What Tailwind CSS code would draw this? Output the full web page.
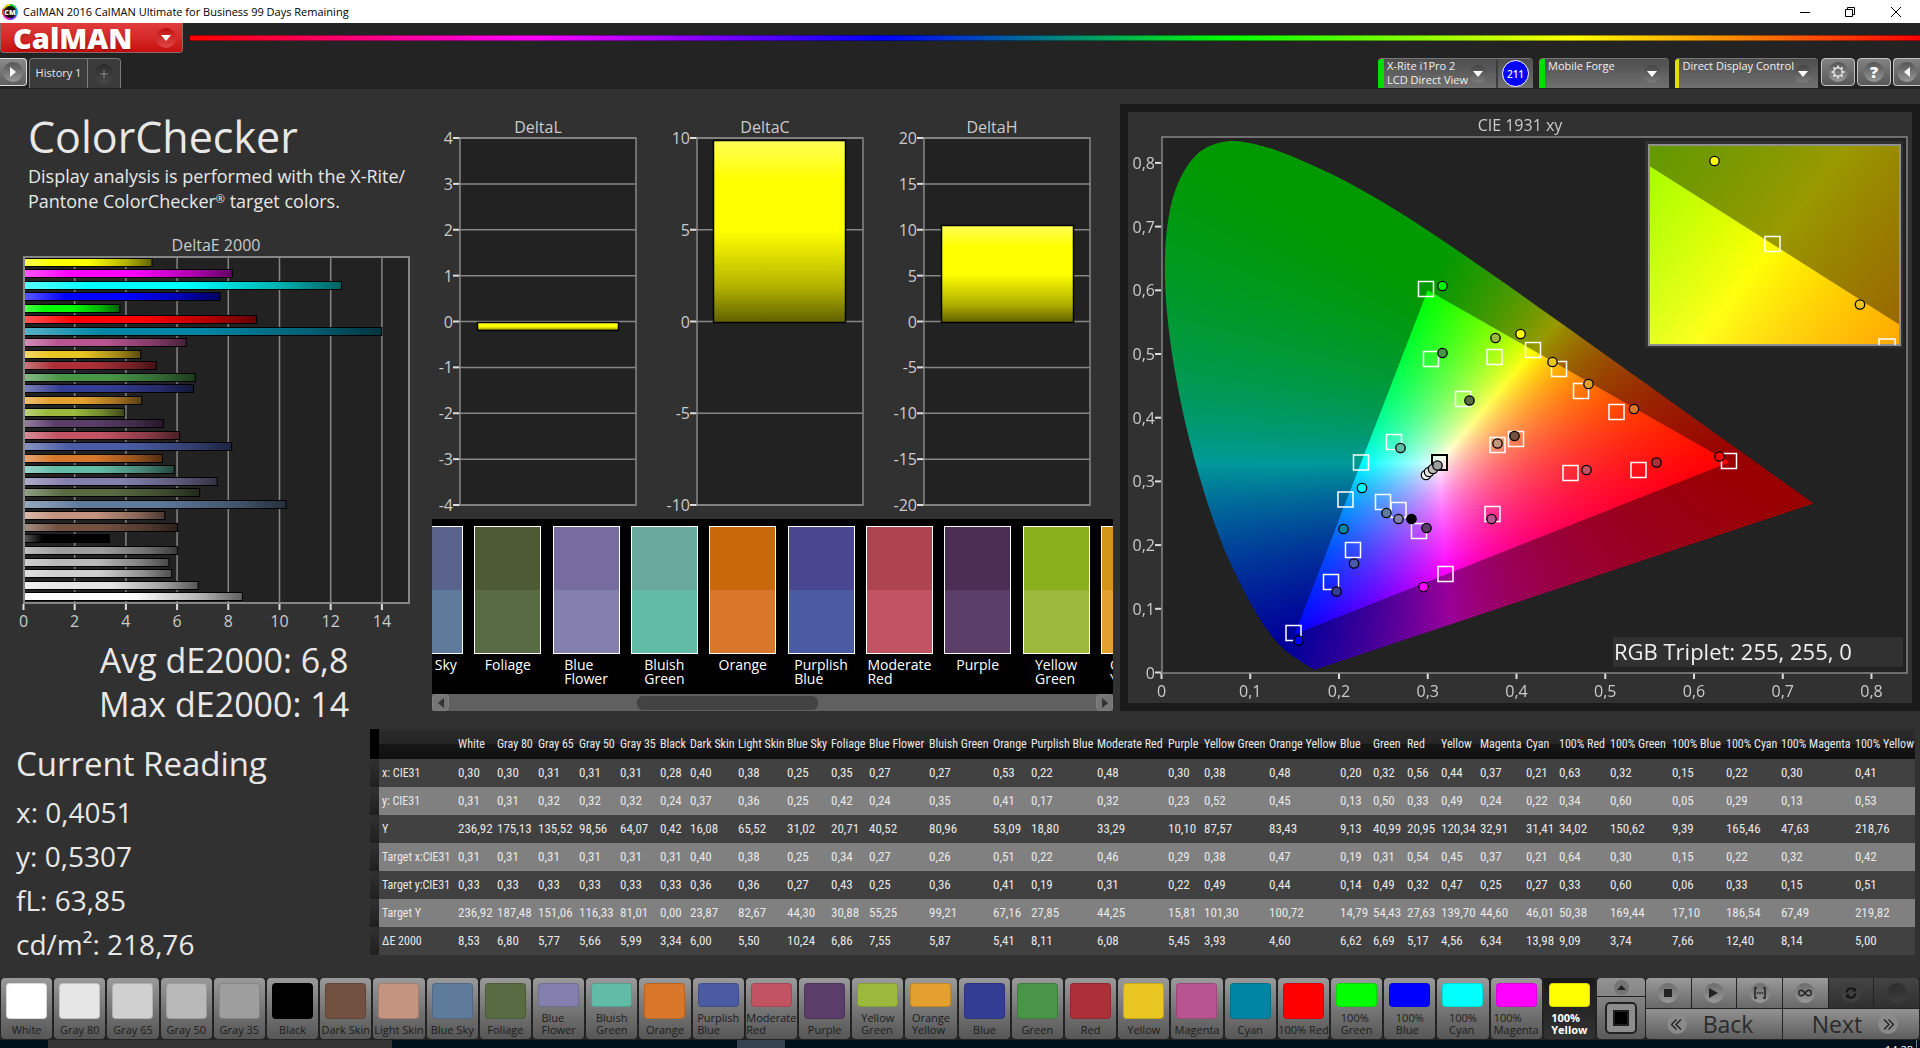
<!DOCTYPE html>
<html lang="en">
<head>
<meta charset="utf-8">
<title>CalMAN 2016</title>
<script src="https://cdn.jsdelivr.net/npm/@tailwindcss/browser@4"></script>
</head>
<body class="flex min-h-screen flex-col overflow-x-hidden bg-[#313131] font-['Open_Sans',sans-serif] text-[#e8e8e8]">

<!-- Window title bar -->
<div class="flex h-[23px] items-center bg-white text-black">
  <svg class="ml-0.5 size-4" viewBox="0 0 16 16">
    <circle cx="8" cy="8" r="7" fill="#111"/>
    <g fill="none" stroke-width="2">
      <path d="M8 1A7 7 0 0 1 14 4.500" stroke="#19c34a"/><path d="M14 4.500A7 7 0 0 1 14 11.500" stroke="#18a8e0"/><path d="M14 11.500A7 7 0 0 1 8 15" stroke="#6a3be0"/><path d="M8 15A7 7 0 0 1 2 11.500" stroke="#e020c0"/><path d="M2 11.500A7 7 0 0 1 2 4.500" stroke="#e04020"/><path d="M2 4.500A7 7 0 0 1 8 1" stroke="#d8d020"/>
    </g>
    <text x="8" y="11" text-anchor="middle" class="fill-white text-[7px] font-extrabold">CM</text>
  </svg>
  <span class="ml-[5px] text-[11px] leading-4">CalMAN 2016 CalMAN Ultimate for Business 99 Days Remaining</span>
  <div class="ml-auto flex h-full">
    <button aria-label="Minimize" class="grid w-[45px] place-items-center"><svg class="size-3" viewBox="0 0 12 12"><path d="M1 6.500h10" stroke="#000"/></svg></button>
    <button aria-label="Restore" class="grid w-[45px] place-items-center"><svg class="size-3" viewBox="0 0 12 12" fill="none" stroke="#000"><path d="M1.500 3.500h7v7h-7zM3.500 3.500v-2h7v7h-2"/></svg></button>
    <button aria-label="Close" class="grid w-[48px] place-items-center"><svg class="size-3" viewBox="0 0 12 12" stroke="#000"><path d="M1 1l10 10M11 1L1 11"/></svg></button>
  </div>
</div>

<!-- Logo, spectrum line, tabs and device menus -->
<header class="bg-[#232323]">
  <div class="flex h-[35px]">
    <button aria-label="CalMAN menu" class="flex h-[30px] w-[183px] items-center rounded-b-[4px] border border-t-0 border-[#8a6a6a] bg-linear-to-b from-[#e13c3c] to-[#c90c0c] pl-3">
      <span class="w-[135px] text-left text-[29px] leading-7 font-extrabold text-white text-shadow-md">CalMAN</span>
      <span class="ml-2 grid size-5 place-items-center rounded-full bg-linear-to-b from-[#c0080c] to-[#e04545]"><svg class="h-[6px] w-[10px]" viewBox="0 0 10 6"><path d="M0 0h10L5 6z" fill="#fff"/></svg></span>
    </button>
    <div class="mt-3 ml-[7px] h-[6px] flex-1 border-y border-black/40 bg-linear-[to_right,#f00,#f0f,#00f,#0f0,#ff0,#f00]"></div>
  </div>
  <div class="flex h-[31px] items-start pb-px">
    <button aria-label="Open panel" class="grid h-[28px] w-[27px] place-items-center rounded-r-[4px] border border-l-0 border-[#ddd] bg-linear-to-b from-[#8a8a8a] to-[#606060]"><span class="grid size-5 place-items-center rounded-full bg-linear-to-b from-[#555] to-[#999]"><svg class="h-[10px] w-[6px]" viewBox="0 0 6 10"><path d="M0 0l6 5-6 5z" fill="#fff"/></svg></span></button>
    <button class="ml-[2px] h-[30px] w-[59px] rounded-tl-[4px] border border-b-0 border-[#7c7c7c] bg-[#3b3b3b] text-[11px] whitespace-nowrap">History 1</button>
    <button aria-label="Add tab" class="-ml-px grid h-[30px] w-[34px] place-items-center rounded-tr-[4px] border border-b-0 border-[#7c7c7c] bg-[#3b3b3b]"><span class="grid size-5 place-items-center rounded-full bg-linear-to-b from-[#2c2c2c] to-[#484848]"><svg class="size-2" viewBox="0 0 8 8"><path d="M4 0v8M0 4h8" stroke="#888"/></svg></span></button>

    <div class="ml-auto flex h-[30px] gap-[6px] text-[11px] leading-[14px] text-[#f0f0f0]">
      <div class="flex w-[155px] overflow-hidden rounded-t-[4px] border-t border-[#777] bg-linear-to-b from-[#4e4e4e] to-[#717171]">
        <span class="w-[6px] bg-[#00e000]"></span>
        <button class="flex w-[114px] items-start justify-between border-r-2 border-[#3e3e3e] pr-[9px] pl-[3px] text-left whitespace-nowrap"><span>X-Rite i1Pro 2<br>LCD Direct View</span><span class="mt-[6px] -ml-4 grid size-[18px] shrink-0 place-items-center rounded-full bg-linear-to-b from-[#444] to-[#7d7d7d]"><svg class="h-[6px] w-[10px]" viewBox="0 0 10 6"><path d="M0 0h10L5 6z" fill="#fff"/></svg></span></button>
        <span class="m-auto grid size-[27px] place-items-center rounded-full border border-white bg-[#0000ff] text-[10px] font-semibold">211</span>
      </div>
      <div class="flex w-[130px] overflow-hidden rounded-t-[4px] border-t border-[#777] bg-linear-to-b from-[#4e4e4e] to-[#717171]">
        <span class="w-[6px] bg-[#00e000]"></span>
        <button class="flex flex-1 items-start justify-between pr-[8px] pl-[3px] whitespace-nowrap"><span>Mobile Forge</span><span class="mt-[6px] grid size-[18px] place-items-center rounded-full bg-linear-to-b from-[#444] to-[#7d7d7d]"><svg class="h-[6px] w-[10px]" viewBox="0 0 10 6"><path d="M0 0h10L5 6z" fill="#fff"/></svg></span></button>
      </div>
      <div class="flex w-[143px] overflow-hidden rounded-t-[4px] border-t border-[#777] bg-linear-to-b from-[#4e4e4e] to-[#717171]">
        <span class="w-[6px] bg-[#e0e000]"></span>
        <button class="flex flex-1 items-start justify-between pr-[6px] pl-[3px] whitespace-nowrap"><span>Direct Display Control</span><span class="mt-[6px] grid size-[18px] place-items-center rounded-full bg-linear-to-b from-[#444] to-[#7d7d7d]"><svg class="h-[6px] w-[10px]" viewBox="0 0 10 6"><path d="M0 0h10L5 6z" fill="#fff"/></svg></span></button>
      </div>
    </div>
    <div class="ml-[3px] flex h-[28px] gap-[2px]">
      <button aria-label="Settings" class="grid w-[34px] place-items-center rounded-[4px] border border-[#c4c4c4] bg-linear-to-b from-[#828282] to-[#585858]"><span class="grid size-5 place-items-center rounded-full bg-linear-to-b from-[#555] to-[#999]"><svg class="size-[14px]" viewBox="0 0 14 14" fill="none" stroke="#e4e4e4"><circle cx="7" cy="7" r="4.200" stroke-width="1.400"/><path d="M7 .5v2M7 11.500v2M.5 7h2M11.500 7h2M2.400 2.400l1.400 1.400M10.200 10.200l1.400 1.400M2.400 11.600l1.400-1.400M10.200 3.800l1.400-1.400" stroke-width="1.800"/></svg></span></button>
      <button aria-label="Help" class="grid w-[34px] place-items-center rounded-[4px] border border-[#c4c4c4] bg-linear-to-b from-[#828282] to-[#585858]"><span class="grid size-5 place-items-center rounded-full bg-linear-to-b from-[#555] to-[#999] text-[16px] leading-4 font-extrabold text-white">?</span></button>
      <button aria-label="Collapse" class="grid w-[27px] place-items-center rounded-l-[4px] border border-r-0 border-[#c4c4c4] bg-linear-to-b from-[#828282] to-[#585858]"><span class="grid size-5 place-items-center rounded-full bg-linear-to-b from-[#555] to-[#999]"><svg class="h-[10px] w-[6px]" viewBox="0 0 6 10"><path d="M6 0L0 5l6 5z" fill="#fff"/></svg></span></button>
    </div>
  </div>
</header>

<main class="flex-1">
  <div class="grid grid-cols-[432fr_688fr_800fr]">
    <section class="min-w-0">
      <h1 class="mt-[22px] pl-7 text-[43px] leading-[52px]">ColorChecker</h1>
      <p class="mt-px pl-7 text-[18px] leading-[25px] whitespace-nowrap">Display analysis is performed with the X-Rite/<br>Pantone ColorChecker<sup class="text-[11px]">®</sup> target colors.</p>
      <svg id="deltaE" class="mt-[21px] w-full" viewBox="0 235 432 395" role="img" aria-label="DeltaE 2000"></svg>
      <p class="mt-2 pl-4 text-center text-[34px] leading-[44px]"><span>Avg dE2000: 6,8</span><br><span>Max dE2000: 14</span></p>
    </section>

    <section class="min-w-0">
      <svg id="deltas" class="mt-4 w-full" viewBox="432 105 688 410" role="img" aria-label="DeltaL, DeltaC and DeltaH"></svg>
      <div class="mt-1 mr-[7px]">
        <div class="h-[175px] overflow-hidden bg-black pt-[7px]">
          <div id="pairs" class="-ml-[36px] grid w-full auto-cols-[11.5%] grid-flow-col"></div>
        </div>
        <div class="flex h-[17px] items-center justify-between bg-[#606060]">
          <button aria-label="Scroll left" class="grid size-[17px] place-items-center rounded-[4px] border border-[#808080] bg-[#757575]"><svg class="h-[10px] w-[6px]" viewBox="0 0 6 10"><path d="M6 0L0 5l6 5z" fill="#333"/></svg></button>
          <div class="h-[14px] flex-1"><div class="ml-[29%] h-[14px] w-[28%] rounded-[6px] bg-[#434343]"></div></div>
          <button aria-label="Scroll right" class="grid size-[17px] place-items-center rounded-[4px] border border-[#808080] bg-[#757575]"><svg class="h-[10px] w-[6px]" viewBox="0 0 6 10"><path d="M0 0l6 5-6 5z" fill="#333"/></svg></button>
        </div>
      </div>
    </section>

    <section class="min-w-0">
      <div class="relative mt-[15px] border-8 border-[#1a1a1a] bg-[#313131]">
        <canvas id="gamut" class="block w-full" width="784" height="591"></canvas>
        <svg id="cie" class="absolute inset-0 size-full" viewBox="1128 112 784 591" role="img" aria-label="CIE 1931 xy"></svg>
      </div>
    </section>
  </div>

  <div class="flex pt-[3px]">
    <section class="w-[370px] shrink-0 pt-[13px] pl-4">
      <h2 class="text-[33px] leading-[44px]">Current Reading</h2>
      <p class="mt-1 text-[28px] leading-[44px]">x: 0,4051</p>
      <p class="text-[28px] leading-[44px]">y: 0,5307</p>
      <p class="text-[28px] leading-[44px]">fL: 63,85</p>
      <p class="text-[28px] leading-[44px]">cd/m²: 218,76</p>
    </section>
    <div class="min-w-0 flex-1 pr-[5px]">
      <table id="readings" class="w-full table-fixed border-collapse text-left font-['Roboto_Condensed',sans-serif] text-[13px] leading-4 whitespace-nowrap"></table>
    </div>
  </div>
</main>

<!-- Patch selector and transport controls -->
<footer class="mt-auto flex h-[62px] bg-[#232323]">
  <div id="patches" class="grid flex-1 grid-cols-[repeat(30,minmax(0,1fr))] gap-x-[2px] pb-px pl-px"></div>
  <div class="ml-[2px] flex w-[48px] flex-col gap-px pb-px">
    <button aria-label="Expand" class="grid h-[18px] place-items-center rounded-t-[4px] bg-linear-to-b from-[#929292] to-[#858585]"><span class="grid size-[15px] place-items-center rounded-full bg-[#747474]"><svg class="h-[5px] w-[9px]" viewBox="0 0 9 5"><path d="M0 5h9L4.500 0z" fill="#222"/></svg></span></button>
    <button aria-label="Patch window" class="grid flex-1 place-items-center rounded-b-[4px] bg-linear-to-b from-[#848484] to-[#5a5a5a]"><span class="grid size-[32px] place-items-center rounded-[5px] border-2 border-[#222] bg-[#8d8d8d]"><span class="size-[16px] border-2 border-[#1d1d1d] bg-black"></span></span></button>
  </div>
  <div class="mr-px ml-px grid w-[273px] grid-cols-6 grid-rows-[30px_30px] gap-px">
    <button aria-label="Stop" class="grid place-items-center rounded-tl-[4px] bg-linear-to-b from-[#9a9a9a] to-[#686868]"><span class="grid size-5 place-items-center rounded-full bg-linear-to-b from-[#6c6c6c] to-[#999]"><svg class="size-2" viewBox="0 0 8 8"><path d="M0 0h8v8H0z" fill="#222"/></svg></span></button>
    <button aria-label="Play" class="grid place-items-center bg-linear-to-b from-[#9a9a9a] to-[#686868]"><span class="grid size-5 place-items-center rounded-full bg-linear-to-b from-[#6c6c6c] to-[#999]"><svg class="h-[10px] w-[9px]" viewBox="0 0 9 10"><path d="M0 0l9 5-9 5z" fill="#222"/></svg></span></button>
    <button aria-label="Read series" class="grid place-items-center bg-linear-to-b from-[#9a9a9a] to-[#686868]"><span class="grid size-5 place-items-center rounded-full bg-linear-to-b from-[#6c6c6c] to-[#999]"><svg class="h-3 w-3" viewBox="0 0 12 12" fill="none" stroke="#222" stroke-width="1.500"><path d="M3 1H1v10h2M9 1h2v10H9M2.800 6h1.600M5.200 6h1.600M7.600 6h1.600"/></svg></span></button>
    <button aria-label="Continuous" class="grid place-items-center bg-linear-to-b from-[#9a9a9a] to-[#686868]"><span class="grid size-5 place-items-center rounded-full bg-linear-to-b from-[#6c6c6c] to-[#999]"><svg class="h-[8px] w-[14px]" viewBox="0 0 14 8" fill="none" stroke="#222" stroke-width="1.400"><path d="M7 4C5.500 2 4.500 1.200 3.500 1.200a2.800 2.800 0 0 0 0 5.600C4.500 6.800 5.500 6 7 4s2.500-2.800 3.500-2.800a2.800 2.800 0 0 1 0 5.600C9.500 6.800 8.500 6 7 4z"/></svg></span></button>
    <button aria-label="Refresh" disabled class="grid place-items-center bg-linear-to-b from-[#444] to-[#303030]"><span class="grid size-5 place-items-center rounded-full bg-[#3f3f3f]"><svg class="size-3" viewBox="0 0 12 12" fill="none" stroke="#161616" stroke-width="2"><path d="M1.500 5.500A4.500 4.500 0 0 1 9.500 3M10.500 6.500A4.500 4.500 0 0 1 2.500 9"/><path d="M11 .5v4H7zM1 11.500v-4h4z" fill="#161616" stroke="none"/></svg></span></button>
    <button aria-label="Record" disabled class="grid place-items-center rounded-tr-[4px] bg-linear-to-b from-[#444] to-[#303030]"><span class="size-5 rounded-full bg-linear-to-b from-[#2c2c2c] to-[#3d3d3d]"></span></button>
    <button class="col-span-3 flex items-center justify-center gap-4 rounded-bl-[4px] bg-linear-to-b from-[#929292] to-[#5e5e5e] pr-2 text-[23px] leading-7 font-medium text-[#2a2a2a]"><span class="grid size-5 place-items-center rounded-full bg-[#8a8a8a]"><svg class="size-[11px]" viewBox="0 0 11 11" fill="none" stroke="#222" stroke-width="1.400"><path d="M5.500.5l-5 5 5 5M10 .5l-5 5 5 5"/></svg></span>Back</button>
    <button class="col-span-3 flex items-center justify-center gap-4 rounded-br-[4px] bg-linear-to-b from-[#929292] to-[#5e5e5e] pl-2 text-[23px] leading-7 font-medium text-[#2a2a2a]">Next<span class="grid size-5 place-items-center rounded-full bg-[#8a8a8a]"><svg class="size-[11px]" viewBox="0 0 11 11" fill="none" stroke="#222" stroke-width="1.400"><path d="M1 .5l5 5-5 5M5.500.5l5 5-5 5"/></svg></span></button>
  </div>
</footer>

<!-- Top edge of the desktop taskbar -->
<div class="flex h-[8px] overflow-hidden bg-[#00101b]">
  <div class="ml-12 h-full w-[344px] bg-[#343434]"></div>
  <div class="ml-[345px] h-full w-[48px] bg-[#364451]"></div>
  <span class="mr-[67px] ml-auto pt-1 text-[11px] leading-3 text-white">14:28</span>
  <span class="mr-[3px] -ml-16 h-full w-px bg-[#69808c]"></span>
</div>

<script>
const P = [
 // name, colour, then x, y, Y, target x, target y, target Y, delta E
 ['White','#ffffff','0,30 0,31 236,92 0,31 0,33 236,92 8,53'],
 ['Gray 80','#e6e6e6','0,30 0,31 175,13 0,31 0,33 187,48 6,80'],
 ['Gray 65','#d0d0d0','0,31 0,32 135,52 0,31 0,33 151,06 5,77'],
 ['Gray 50','#b9b9b9','0,31 0,32 98,56 0,31 0,33 116,33 5,66'],
 ['Gray 35','#9e9e9e','0,31 0,32 64,07 0,31 0,33 81,01 5,99'],
 ['Black','#000000','0,28 0,24 0,42 0,31 0,33 0,00 3,34'],
 ['Dark Skin','#735141','0,40 0,37 16,08 0,40 0,36 23,87 6,00'],
 ['Light Skin','#c49480','0,38 0,36 65,52 0,38 0,36 82,67 5,50'],
 ['Blue Sky','#5e7b9c','0,25 0,25 31,02 0,25 0,27 44,30 10,24'],
 ['Foliage','#586b42','0,35 0,42 20,71 0,34 0,43 30,88 6,86'],
 ['Blue Flower','#8480ae','0,27 0,24 40,52 0,27 0,25 55,25 7,55'],
 ['Bluish Green','#62bba7','0,27 0,35 80,96 0,26 0,36 99,21 5,87'],
 ['Orange','#d8772a','0,53 0,41 53,09 0,51 0,41 67,16 5,41'],
 ['Purplish Blue','#4a5ba3','0,22 0,17 18,80 0,22 0,19 27,85 8,11'],
 ['Moderate Red','#c15362','0,48 0,32 33,29 0,46 0,31 44,25 6,08'],
 ['Purple','#5b3d6a','0,30 0,23 10,10 0,29 0,22 15,81 5,45'],
 ['Yellow Green','#9cb93e','0,38 0,52 87,57 0,38 0,49 101,30 3,93'],
 ['Orange Yellow','#e4a02f','0,48 0,45 83,43 0,47 0,44 100,72 4,60'],
 ['Blue','#343d94','0,20 0,13 9,13 0,19 0,14 14,79 6,62'],
 ['Green','#489548','0,32 0,50 40,99 0,31 0,49 54,43 6,69'],
 ['Red','#ad3038','0,56 0,33 20,95 0,54 0,32 27,63 5,17'],
 ['Yellow','#e9c522','0,44 0,49 120,34 0,45 0,47 139,70 4,56'],
 ['Magenta','#b85490','0,37 0,24 32,91 0,37 0,25 44,60 6,34'],
 ['Cyan','#0086a4','0,21 0,22 31,41 0,21 0,27 46,01 13,98'],
 ['100% Red','#ff0000','0,63 0,34 34,02 0,64 0,33 50,38 9,09'],
 ['100% Green','#00ff00','0,32 0,60 150,62 0,30 0,60 169,44 3,74'],
 ['100% Blue','#0000ff','0,15 0,05 9,39 0,15 0,06 17,10 7,66'],
 ['100% Cyan','#00ffff','0,22 0,29 165,46 0,22 0,33 186,54 12,40'],
 ['100% Magenta','#ff00ff','0,30 0,13 47,63 0,32 0,15 67,49 8,14'],
 ['100% Yellow','#ffff00','0,41 0,53 218,76 0,42 0,51 219,82 5,00']
].map(([name, color, v]) => ({ name, color, v: v.split(' ') }));
const $ = id => document.getElementById(id);
const mix = (hex, to, k) => '#' + [1, 3, 5].map(i => Math.round(parseInt(hex.slice(i, i + 2), 16) * (1 - k) + to * k).toString(16).padStart(2, '0')).join('');
const label = (x, y, s, anchor = 'middle') => `<text x="${x}" y="${y}" text-anchor="${anchor}" class="fill-[#cbcbcb] text-[16px]">${s}</text>`;
const line = (x1, y1, x2, y2, c = '#868686') => `<path d="M${x1} ${y1}L${x2} ${y2}" stroke="${c}" stroke-width="${c === '#868686' ? 1.5 : 2}"/>`;

// Delta E bars, most recent patch first
{
  let s = label(216, 251, 'DeltaE 2000') + '<rect x="24" y="257" width="385" height="346" fill="#222"/><defs>';
  P.forEach((p, i) => s += `<linearGradient id="g${i}"><stop offset="0" stop-color="${mix(p.color, 255, .35)}"/><stop offset=".22" stop-color="${p.color}"/><stop offset=".5" stop-color="${p.color}"/><stop offset=".8" stop-color="${mix(p.color, 0, .3)}"/><stop offset="1" stop-color="${mix(p.color, 0, .62)}"/></linearGradient>`);
  s += '</defs>';
  for (let k = 0; k <= 14; k += 2) {
    const x = 23.5 + k * 25.6;
    if (k) s += line(x, 257, x, 603);
    s += line(x, 604, x, 610, '#ddd') + label(x, 627, k);
  }
  P.slice().reverse().forEach((p, r) => {
    const w = parseFloat(p.v[6].replace(',', '.')) * 25.6;
    s += `<rect x="24" y="${Math.round(257.5 + r * 11.54) + .5}" width="${w}" height="8" fill="url(#g${P.length - 1 - r})" stroke="#000"/>`;
  });
  s += '<rect x="24" y="257" width="385" height="346" fill="none" stroke="#868686" stroke-width="2"/>';
  $('deltaE').innerHTML = s;
}

// Delta L / C / H charts
{
  let s = '<defs><linearGradient id="yv" x2="0" y2="1"><stop offset="0" stop-color="#ffff55"/><stop offset=".22" stop-color="#ff0"/><stop offset=".5" stop-color="#ff0"/><stop offset=".8" stop-color="#b4b400"/><stop offset="1" stop-color="#606000"/></linearGradient></defs>';
  [['DeltaL', 460, 636, 4, 1, 477, 322, 141, 8], ['DeltaC', 697, 863, 10, 5, 713, 140, 132, 182], ['DeltaH', 924, 1090, 20, 5, 941, 225, 132, 97]].forEach(([t, a, b, max, step, bx, by, bw, bh], i) => {
    s += label([538, 765, 992][i], 133, t) + `<rect x="${a}" y="138" width="${b - a}" height="367" fill="#222"/>`;
    for (let v = max; v >= -max; v -= step) {
      const y = 138 + (max - v) / (2 * max) * 367;
      s += line(a, y, b, y) + line(a - 7, y, a, y, '#ddd') + label(a - 7, y + 6, v, 'end');
    }
    s += `<rect x="${a}" y="138" width="${b - a}" height="367" fill="none" stroke="#868686" stroke-width="1.500"/><rect x="${bx + .5}" y="${by + .5}" width="${bw}" height="${bh}" fill="url(#yv)" stroke="#000" stroke-width="1.500"/>`;
  });
  $('deltas').innerHTML = s;
}

// Measured (top) against target (bottom) swatches
$('pairs').innerHTML = [['Blue<br>Sky', '#5a638c', '#5e7b9c'], ['Foliage', '#4d5a33', '#586b42'], ['Blue<br>Flower', '#776c9f', '#8480ae'], ['Bluish<br>Green', '#69a99e', '#62bba7'], ['Orange', '#c7690a', '#d8772a'], ['Purplish<br>Blue', '#484790', '#4a5ba3'], ['Moderate<br>Red', '#ad444f', '#c15362'], ['Purple', '#4c2e52', '#5b3d6a'], ['Yellow<br>Green', '#8ab01e', '#9cb93e'], ['Orange<br>Yellow', '#d39518', '#e4a02f']]
 .map(([n, a, b], i) => `<div class="flex w-[67px] flex-col items-center"><div class="flex h-[128px] w-full flex-col border border-white"><div class="flex-1" style="background:${a}"></div><div class="flex-1" style="background:${b}"></div></div><span class="mt-1 text-[14px] leading-[14px] whitespace-nowrap text-white">${i ? n : 'Blue Sky'}</span></div>`).join('');

// Chromaticity diagram
{
  const X0 = 1161.5, Y0 = 672.5, SX = 887.5, SY = 637;
  const locus = [[.1741,.005],[.1714,.0051],[.1689,.0069],[.1644,.0109],[.1566,.0177],[.151,.0227],[.144,.0297],[.1355,.0399],[.1241,.0578],[.1096,.0868],[.0913,.1327],[.0687,.2007],[.0454,.295],[.0235,.4127],[.0082,.5384],[.0039,.6548],[.0139,.7502],[.0389,.812],[.0743,.8338],[.1142,.8262],[.1547,.8059],[.1929,.7816],[.2296,.7543],[.2658,.7243],[.3016,.6923],[.3373,.6589],[.3731,.6245],[.4087,.5896],[.4441,.5547],[.4788,.5202],[.5125,.4866],[.5448,.4544],[.5752,.4242],[.627,.3725],[.6658,.334],[.6915,.3083],[.719,.2809],[.7347,.2653]];
  // Linear RGB scaled to its brightest channel
  const rgb = (x, y) => {
    y = Math.max(y, .001);
    const X = x / y, Z = (1 - x - y) / y;
    const c = [3.2406 * X - 1.5372 - .4986 * Z, -.9689 * X + 1.8758 + .0415 * Z, .0557 * X - .204 + 1.057 * Z].map(v => Math.max(0, v));
    const m = Math.max(...c);
    return c.map(v => 255 * v / m);
  };
  const ctx = $('gamut').getContext('2d');
  const paint = (x0, y0, w, h, toXY, fromXY) => {
    const layer = k => {
      const o = document.createElement('canvas'); o.width = w; o.height = h;
      const c = o.getContext('2d'), d = c.createImageData(w, h);
      for (let j = 0, n = 0; j < h; j++) for (let i = 0; i < w; i++, n += 4) {
        const q = rgb(...toXY(x0 + i + .5, y0 + j + .5));
        d.data[n] = q[0] * k; d.data[n + 1] = q[1] * k; d.data[n + 2] = q[2] * k; d.data[n + 3] = 255;
      }
      c.putImageData(d, 0, 0);
      return o;
    };
    const clipped = (img, path) => {
      ctx.save(); ctx.beginPath(); ctx.rect(x0, y0, w, h); ctx.clip(); ctx.beginPath(); path(); ctx.closePath(); ctx.clip(); ctx.drawImage(img, x0, y0); ctx.restore();
    };
    clipped(layer(.6), () => {
      const p = locus.map(fromXY);
      ctx.moveTo(...p[0]);
      for (let i = 0; i < p.length - 1; i++) {
        const a = p[Math.max(i - 1, 0)], b = p[i], c = p[i + 1], d = p[Math.min(i + 2, p.length - 1)];
        ctx.bezierCurveTo(b[0] + (c[0] - a[0]) / 6, b[1] + (c[1] - a[1]) / 6, c[0] - (d[0] - b[0]) / 6, c[1] - (d[1] - b[1]) / 6, c[0], c[1]);
      }
    });
    clipped(layer(1), () => [[.3, .6], [.64, .33], [.15, .06]].map(fromXY).forEach((q, i) => i ? ctx.lineTo(...q) : ctx.moveTo(...q)));
  };
  ctx.translate(-1128, -112);
  ctx.fillStyle = '#222'; ctx.fillRect(1162, 137, 745, 536);
  paint(1162, 137, 745, 535, (i, j) => [(i - X0) / SX, (Y0 - j) / SY], ([x, y]) => [X0 + x * SX, Y0 - y * SY]);
  ctx.fillStyle = '#313131'; ctx.fillRect(1645, 141, 258, 207);
  paint(1649, 144, 251, 201, (i, j) => [.4193 + (i - 1772.5) / 4090, .5053 + (244 - j) / 3268], ([x, y]) => [1772.5 + (x - .4193) * 4090, 244 - (y - .5053) * 3268]);

  let s = label(1520, 131, 'CIE 1931 xy');
  for (let k = 0; k <= 8; k++) {
    const x = X0 + k * SX / 10, y = Y0 - k * SY / 10, t = k ? '0,' + k : '0';
    s += line(x, 673, x, 679, '#ddd') + label(x, 697, t) + line(1155, y, 1161, y, '#ddd') + label(1155, y + 6, t, 'end');
  }
  s += '<rect x="1162" y="137" width="745" height="536" fill="none" stroke="#868686" stroke-width="1.500"/><rect x="1649" y="145" width="251" height="200" fill="none" stroke="#909090" stroke-width="2"/>';
  const sq = (x, y, c = '#fff') => `<rect x="${x - 7.5}" y="${y - 7.5}" width="15" height="15" fill="none" stroke="${c}" stroke-width="${c === '#fff' ? 1.500 : 2}"/>`;
  [[1426,289],[1431,359],[1494.5,357],[1533,350],[1559,369],[1581,391],[1463,399],[1616.5,412],[1516,439],[1497.5,445],[1394,442],[1361,462.5],[1729,461],[1570.5,473],[1638.5,470],[1345.5,499.5],[1383,502],[1398.5,510],[1492.5,514],[1419,531],[1353,550],[1445.5,574],[1331,582],[1293.5,633],[1772.5,244]].forEach(p => s += sq(...p));
  s += sq(1439.5, 462.5, '#000') + '<path d="M1879 345v-6h16v6" fill="none" stroke="#fff" stroke-width="1.500"/>';
  [[1442.5,286,'#00ff00'],[1442.5,353,'#489548'],[1495.5,338,'#9cb93e'],[1520.5,334,'#ffff00'],[1552.5,362,'#e9c522'],[1588.5,384,'#e4a02f'],[1469.5,400.5,'#586b42'],[1634,409,'#d8772a'],[1514.5,436,'#735141'],[1497.5,443.5,'#c49480'],[1400.5,448,'#62bba7'],[1719.5,456.5,'#ff0000'],[1586.5,470,'#c15362'],[1656.5,462.5,'#ad3038'],[1362,488,'#00ffff'],[1386.5,513,'#5e7b9c'],[1398.5,519,'#8480ae'],[1411.5,519,'#000000'],[1426.5,528,'#5b3d6a'],[1343.5,529,'#0086a4'],[1491.5,519,'#b85490'],[1354,563.5,'#4a5ba3'],[1423.5,587,'#ff00ff'],[1336.5,591.5,'#343d94'],[1298.5,640.5,'#0000ff'],[1426,475,'#ffffff'],[1429,472,'#e2e2e2'],[1433,469,'#bbbbbb'],[1437.5,465.5,'#9e9e9e'],[1714.5,161,'#ffff00'],[1860,304.5,'#e9c522']]
    .forEach(([x, y, c]) => s += `<circle cx="${x}" cy="${y}" r="4.700" fill="${c}" stroke="#000" stroke-width="1.300"/>`);
  s += '<rect x="1613" y="637" width="290" height="30" fill="#313131"/><text x="1614" y="660" class="fill-[#f0f0f0] text-[22px]">RGB Triplet: 255, 255, 0</text>';
  $('cie').innerHTML = s;
}

// Readings table
{
  const edges = [370, 379, 455, 494, 535, 576, 617, 657, 687, 735, 784, 828, 866, 926, 990, 1028, 1094, 1165, 1201, 1266, 1337, 1370, 1404, 1438, 1477, 1523, 1556, 1607, 1669, 1723, 1778, 1852, 1915];
  let s = '<colgroup>';
  for (let i = 1; i < edges.length; i++) s += `<col style="width:${(edges[i] - edges[i - 1]) / 15.45}%">`;
  s += '</colgroup><thead><tr class="h-[30px] bg-linear-[to_bottom,#2c2c2c_0%,#252525_50%,#161616_50%,#101010_100%]"><td class="bg-black"></td><td></td>' + P.map(p => `<th scope="col" class="pl-[3px] text-[12px] font-normal">${p.name}</th>`).join('') + '</tr></thead><tbody>';
  ['x: CIE31', 'y: CIE31', 'Y', 'Target x:CIE31', 'Target y:CIE31', 'Target Y', 'ΔE 2000'].forEach((n, r) => {
    s += `<tr class="h-[28px] odd:bg-[#414141] even:bg-[#808080]"><td class="bg-linear-to-b from-[#313131] to-[#202020]"></td><th scope="row" class="pl-[3px] text-[12px] font-normal">${n}</th>` + P.map(p => `<td class="pl-[3px]">${p.v[r]}</td>`).join('') + '</tr>';
  });
  $('readings').innerHTML = s + '</tbody>';
}

// Patch buttons
$('patches').innerHTML = P.map((p, i) => {
  const two = i >= 25 || [10, 11, 13, 14, 16, 17].includes(i), on = i === 29;
  return `<button class="flex flex-col items-center justify-between rounded-[4px] pt-[5px] pb-[3px] ${on ? 'bg-linear-to-b from-[#1a1a1a] to-[#333] font-bold text-white' : 'bg-linear-to-b from-[#9a9a9a] to-[#565656] font-medium text-[#1c1c1c]'}"><span class="w-[41px] rounded-[4px] border border-black/15 ${two ? 'h-[24px]' : 'h-[36px]'}" style="background:${p.color}"></span><span class="text-left text-[11px] leading-3 whitespace-nowrap">${two ? p.name.replace(' ', '<br>') : p.name}</span></button>`;
}).join('');
</script>
</body>
</html>
